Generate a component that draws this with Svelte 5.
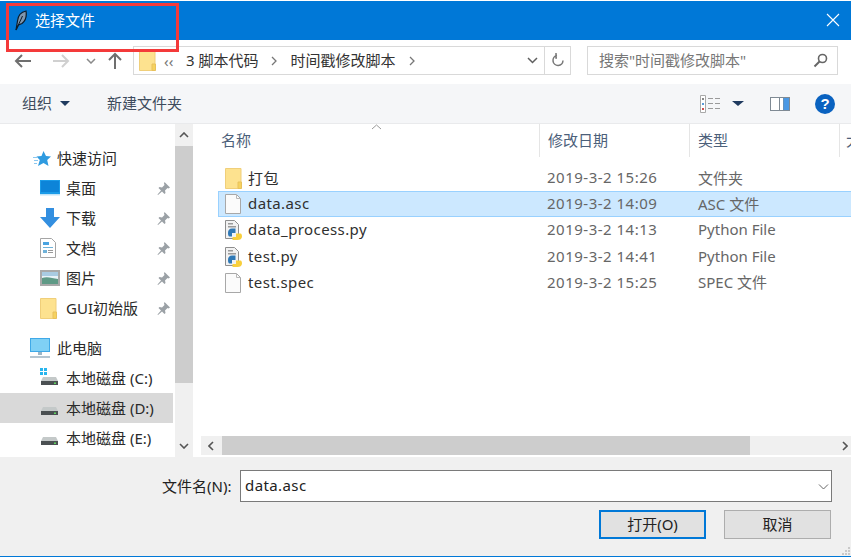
<script>
	const quick = [
		{ name: '桌面', icon: 'desktop' },
		{ name: '下载', icon: 'download' },
		{ name: '文档', icon: 'docs' },
		{ name: '图片', icon: 'pics' },
		{ name: 'GUI初始版', icon: 'folder' }
	]
	const drives = [
		{ name: '本地磁盘 (C:)', win: true },
		{ name: '本地磁盘 (D:)', active: true },
		{ name: '本地磁盘 (E:)' }
	]
	const files = [
		{ name: '打包', date: '2019-3-2 15:26', type: '文件夹', icon: 'folder' },
		{ name: 'data.asc', date: '2019-3-2 14:09', type: 'ASC 文件', icon: 'file', selected: true },
		{ name: 'data_process.py', date: '2019-3-2 14:13', type: 'Python File', icon: 'py' },
		{ name: 'test.py', date: '2019-3-2 14:41', type: 'Python File', icon: 'py' },
		{ name: 'test.spec', date: '2019-3-2 15:25', type: 'SPEC 文件', icon: 'file' }
	]
</script>

{#snippet folder()}
	<svg width="17" height="21" viewBox="0 0 17 21">
		<path d="M.5 .5h15.5v20H.5z" fill="#fde28f" stroke="#f0cf7a" />
		<path d="M13 14h3.500v6.500H13z" fill="#f6d25f" stroke="#e8c15c" />
	</svg>
{/snippet}

{#snippet drive(win)}
	<svg width="20" height="20" viewBox="0 0 20 20">
		{#if win}
			<path d="M0 0h3v3H0zM4 0h3v3H4zM0 4h3v3H0zM4 4h3v3H4z" fill="#28b5ee" />
		{/if}
		<path d="M3 9h13l2 4H1z" fill="#c4c9c9" />
		<path d="M1 13h17v4H1z" fill="#4b5052" />
		<path d="M14 14.500h2v1.500h-2z" fill="#5fd35f" />
	</svg>
{/snippet}

{#snippet pin()}
	<svg class="pin" width="13" height="13" viewBox="0 0 13 13">
		<path d="M7.500 0 13 5.500l-1.500 1-1-.5-2.500 2.500.5 2.500-1 1-2.500-2.500L1 13l-.5-.5L4 8.500 1.500 6l1-1 2.500.5L7.500 3 7 1.500z" fill="#9ba1a6" />
	</svg>
{/snippet}

{#snippet fileIcon(kind)}
	{#if kind === 'folder'}
		{@render folder()}
	{:else if kind === 'file'}
		<svg width="16" height="20" viewBox="0 0 16 20">
			<path d="M.5 .5h11l4 4v15H.5z" fill="#fbfbfb" stroke="#a8a8a8" />
			<path d="M11.500 .5v4h4" fill="none" stroke="#b8b8b8" />
		</svg>
	{:else}
		<svg width="17" height="20" viewBox="0 0 17 20">
			<path d="M.5 .5h9l4 4v14H.5z" fill="#f2f2f2" stroke="#8e8e8e" />
			<path d="M3 3h5v1.500H3zM3 6h8v1.500H3z" fill="#9a9a9a" />
			<path d="M3 13c0-3 1.500-4.500 4-4.500h3.500V13H7v3.500H4.500C3.500 16.500 3 15 3 13z" fill="#2f78b5" />
			<path d="M7.500 20v-3H11v-3.500h4.500c1 0 1.500 1.500 1.500 3 0 2.500-2 3.500-4.500 3.500z" fill="#f8cf3c" />
		</svg>
	{/if}
{/snippet}

<div class="dialog">
	<header class="title">
		<svg class="feather" width="14" height="24" viewBox="0 0 14 24">
			<path d="M2 22 3.500 13C4 8 7 4 12 3c.8 5-.5 10-4 12.500L4.500 17z" fill="#7f96ad" stroke="#0c1c2a" stroke-width="1.200" />
			<path d="M2 22 8.500 8" stroke="#0c1c2a" fill="none" />
		</svg>
		<span>选择文件</span>
		<svg class="close" width="14" height="14" viewBox="0 0 14 14">
			<path d="M1 1l12 12M13 1 1 13" stroke="#fff" stroke-width="1.100" fill="none" />
		</svg>
	</header>

	<nav class="nav">
		<div class="arrows">
			<svg width="20" height="16" viewBox="0 0 20 16"><path d="M9 2 3 8l6 6M3 8h15" fill="none" stroke="#6f6f6f" stroke-width="2" /></svg>
			<svg class="fwd" width="20" height="16" viewBox="0 0 20 16"><path d="M11 2l6 6-6 6M17 8H2" fill="none" stroke="#d0d0d0" stroke-width="2" /></svg>
			<svg class="hist" width="10" height="6" viewBox="0 0 10 6"><path d="M1 1l4 4 4-4" fill="none" stroke="#8a8a8a" stroke-width="1.500" /></svg>
			<svg class="up" width="16" height="18" viewBox="0 0 16 18"><path d="M2 8l6-6 6 6M8 2v15" fill="none" stroke="#6f6f6f" stroke-width="2" /></svg>
		</div>
		<div class="address">
			<span class="addr-folder">{@render folder()}</span>
			<span class="chev">‹‹</span>
			<span class="crumb">3 脚本代码</span>
			<svg class="sep" width="6" height="10" viewBox="0 0 6 10"><path d="M1 1l4 4-4 4" fill="none" stroke="#777" stroke-width="1.300" /></svg>
			<span class="crumb">时间戳修改脚本</span>
			<svg class="sep" width="6" height="10" viewBox="0 0 6 10"><path d="M1 1l4 4-4 4" fill="none" stroke="#777" stroke-width="1.300" /></svg>
			<svg class="drop" width="11" height="7" viewBox="0 0 11 7"><path d="M1 1l4.500 4.500L10 1" fill="none" stroke="#5f5f5f" stroke-width="1.500" /></svg>
			<div class="refresh">
				<svg width="14" height="15" viewBox="0 0 14 15"><path d="M6 2.500A5 5 0 1 0 12 7.500M5 0v5h1" fill="none" stroke="#777" stroke-width="1.500" /></svg>
			</div>
		</div>
		<div class="search">
			<span>搜索"时间戳修改脚本"</span>
			<svg width="15" height="15" viewBox="0 0 15 15"><circle cx="9.500" cy="5.500" r="4" fill="none" stroke="#666" stroke-width="1.600" /><path d="M6.500 8.500 1.500 13.500" stroke="#666" stroke-width="2" /></svg>
		</div>
	</nav>

	<div class="commands">
		<span class="cmd">组织</span>
		<span class="tri"></span>
		<span class="cmd new">新建文件夹</span>
		<svg class="views" width="21" height="18" viewBox="0 0 21 18">
			<path d="M.5 .5h5v17h-5z" fill="#fff" stroke="#a9a9a9" />
			<path d="M2 3h2v2H2z" fill="#888" /><path d="M2 8h2v2H2z" fill="#5a9bd8" /><path d="M2 13h2v2H2z" fill="#d05050" />
			<path d="M8 3h5v1H8zM15 3h5v1h-5zM8 8h5v1H8zM15 8h5v1h-5zM8 13h5v1H8zM15 13h5v1h-5z" fill="#9a9a9a" />
		</svg>
		<span class="tri views-tri"></span>
		<svg class="pane" width="20" height="14" viewBox="0 0 20 14">
			<path d="M0 0h20v14H0z" fill="#7f8a94" />
			<path d="M1 1h8v12H1z" fill="#fff" /><path d="M10 1h3v12h-3z" fill="#fff" /><path d="M13.500 1H19v12h-5.500z" fill="#4a98e4" />
		</svg>
		<span class="help">?</span>
	</div>

	<main class="body">
		<aside class="side">
			<ul>
				<li class="top">
					<svg width="18" height="15" viewBox="0 0 18 15"><path d="M10.500 0l2.500 5 5 .5-3.800 3.500 1.300 6-5-3-5.500 3 1.800-6L3.500 5.500l5-.5z" fill="#2f9be0" /><path d="M0 6.500h5M1 9.500h4M1 12.500h3" stroke="#8cc8f0" /></svg>
					<span>快速访问</span>
				</li>
				{#each quick as q}
					<li class="sub">
						<span class="ico">
							{#if q.icon === 'desktop'}
								<svg width="20" height="16" viewBox="0 0 20 16"><path d="M0 0h20v15H0z" fill="#1a9be8" /><path d="M1 1h18v11H1z" fill="#0d84d8" /><path d="M0 14h20v1.500H0z" fill="#bfe3f7" /></svg>
							{:else if q.icon === 'download'}
								<svg width="20" height="20" viewBox="0 0 20 20"><path d="M6 0h8v9h6L10 20 0 9h6z" fill="#338fe0" /></svg>
							{:else if q.icon === 'docs'}
								<svg width="16" height="20" viewBox="0 0 16 20"><path d="M.5 .5h11l4 4v15H.5z" fill="#fff" stroke="#a5a5a5" /><path d="M3 4h6v3H3z" fill="#4aa3e0" /><path d="M3 9h10v1H3zM3 12h4v3H3z" fill="#6fb2d9" /><path d="M8 12h5v1H8zM8 14h5v1H8z" fill="#999" /></svg>
							{:else if q.icon === 'pics'}
								<svg width="20" height="16" viewBox="0 0 20 16"><path d="M0 0h20v16H0z" fill="#a9a9a9" /><path d="M2 2h16v12H2z" fill="#e8f2f8" /><path d="M2 8c5-2 10 0 16 1v5H2z" fill="#5f9a86" /><path d="M2 2h16v4H2z" fill="#a9cbe2" /></svg>
							{:else}
								{@render folder()}
							{/if}
						</span>
						<span class="label">{q.name}</span>
						{@render pin()}
					</li>
				{/each}
				<li class="top pc">
					<svg width="20" height="20" viewBox="0 0 20 20"><path d="M0 0h20v14H0z" fill="#3fa9e8" /><path d="M1 1h18v12H1z" fill="#7fd0f5" /><path d="M8 14h4v3H8z" fill="#9db6c7" /><path d="M0 18h20v2H0z" fill="#b5c6d1" /></svg>
					<span>此电脑</span>
				</li>
				{#each drives as d}
					<li class="sub" class:active={d.active}>
						<span class="ico">{@render drive(d.win)}</span>
						<span class="label">{d.name}</span>
					</li>
				{/each}
			</ul>
		</aside>

		<div class="vbar">
			<button aria-label="up"><svg width="10" height="6" viewBox="0 0 10 6"><path d="M1 5l4-4 4 4" fill="none" stroke="#555" stroke-width="1.600" /></svg></button>
			<div class="vtrack"><div class="vthumb"></div></div>
			<button aria-label="down"><svg width="10" height="6" viewBox="0 0 10 6"><path d="M1 1l4 4 4-4" fill="none" stroke="#555" stroke-width="1.600" /></svg></button>
		</div>

		<section class="list">
			<div class="head">
				<span class="col name">名称</span>
				<svg class="sort" width="11" height="6" viewBox="0 0 11 6"><path d="M1 5l4.500-4L10 5" fill="none" stroke="#9a9a9a" /></svg>
				<span class="col date">修改日期</span>
				<span class="col type">类型</span>
				<span class="col more">大</span>
			</div>
			<div class="rows">
				{#each files as f}
					<div class="row" class:selected={f.selected}>
						<span class="fico">{@render fileIcon(f.icon)}</span>
						<span class="fname">{f.name}</span>
						<span class="fdate">{f.date}</span>
						<span class="ftype">{f.type}</span>
					</div>
				{/each}
			</div>
			<div class="hbar">
				<svg width="6" height="10" viewBox="0 0 6 10"><path d="M5 1 1 5l4 4" fill="none" stroke="#555" stroke-width="1.600" /></svg>
				<div class="htrack"><div class="hthumb"></div></div>
				<svg width="6" height="10" viewBox="0 0 6 10"><path d="M1 1l4 4-4 4" fill="none" stroke="#555" stroke-width="1.600" /></svg>
			</div>
		</section>
	</main>

	<footer class="foot">
		<div class="fname-row">
			<label for="fn">文件名(N):</label>
			<div class="combo">
				<input id="fn" value="data.asc" />
				<svg width="11" height="6" viewBox="0 0 11 6"><path d="M1 .5l4.500 4.500L10 .5" fill="none" stroke="#666" /></svg>
			</div>
		</div>
		<div class="buttons">
			<button class="btn primary">打开(O)</button>
			<button class="btn">取消</button>
		</div>
		<svg class="grip" width="10" height="10" viewBox="0 0 10 10">
			<path d="M7 1h2v2H7zM4 4h2v2H4zM7 4h2v2H7zM1 7h2v2H1zM4 7h2v2H4zM7 7h2v2H7z" fill="#c9c9c9" />
		</svg>
	</footer>

	<div class="annotation"></div>
</div>

<style>
	:global(body) {
		margin: 0;
		background: #fff;
	}
	.dialog {
		position: relative;
		width: 851px;
		height: 557px;
		padding-top: 1px;
		box-sizing: border-box;
		display: flex;
		flex-direction: column;
		overflow: hidden;
		font-family: "Noto Sans", "Noto Sans CJK SC", sans-serif;
		font-size: 15px;
		color: #2a2a2a;
		border-bottom: 1px solid #0078d7;
	}
	.title {
		height: 39px;
		flex: none;
		box-sizing: border-box;
		background: #0078d7;
		color: #fff;
		display: flex;
		align-items: center;
		padding: 0 11px 2px 14px;
	}
	.title span {
		margin-left: 7px;
		flex: 1;
	}
	.annotation {
		position: absolute;
		left: 6px;
		top: 3px;
		width: 167px;
		height: 43px;
		border: 3px solid #f43a3a;
	}
	.nav {
		height: 44px;
		flex: none;
		background: #fff;
		display: flex;
		align-items: center;
		padding-left: 13px;
		box-sizing: border-box;
		padding-bottom: 3px;
	}
	.arrows {
		width: 120px;
		display: flex;
		align-items: center;
	}
	.fwd {
		margin-left: 18px;
	}
	.hist {
		margin-left: 15px;
	}
	.up {
		margin-left: 11px;
	}
	.address {
		width: 438px;
		height: 29px;
		box-sizing: border-box;
		border: 1px solid #d9d9d9;
		display: flex;
		align-items: center;
		padding-left: 5px;
		color: #333;
	}
	.addr-folder {
		height: 21px;
	}
	.chev {
		margin-left: 8px;
		color: #777;
		width: 22px;
	}
	.crumb, .search span {
		margin-top: -2px;
	}
	.sep {
		margin: 0 13px;
	}
	.drop {
		margin-left: auto;
		margin-right: 6px;
	}
	.refresh {
		width: 25px;
		height: 100%;
		border-left: 1px solid #d9d9d9;
		display: flex;
		align-items: center;
		justify-content: center;
	}
	.search {
		margin-left: 16px;
		width: 251px;
		height: 29px;
		box-sizing: border-box;
		border: 1px solid #d9d9d9;
		display: flex;
		align-items: center;
		justify-content: space-between;
		padding: 0 9px 0 11px;
		color: #777;
	}
	.commands {
		height: 39px;
		flex: none;
		background: #f5f6f8;
		display: flex;
		align-items: center;
		padding-left: 22px;
		color: #3d4b5c;
	}
	.cmd {
		margin-top: -3px;
	}
	.tri {
		width: 0;
		height: 0;
		border-left: 5px solid transparent;
		border-right: 5px solid transparent;
		border-top: 5px solid #1f3a5f;
		margin-left: 8px;
	}
	.new {
		margin-left: 37px;
		flex: 1;
	}
	.views-tri {
		margin-left: 11px;
		margin-right: 26px;
		border-left-width: 6px;
		border-right-width: 6px;
	}
	.help {
		margin: 0 16px 0 25px;
		width: 20px;
		height: 20px;
		border-radius: 50%;
		background: #0a62c0;
		color: #fff;
		font-weight: 700;
		font-size: 15px;
		line-height: 20px;
		text-align: center;
		font-family: "Liberation Sans", sans-serif;
	}
	.body {
		flex: 1;
		min-height: 0;
		display: flex;
		background: #fff;
		border-top: 1px solid #e9eaec;
	}
	.side {
		width: 175px;
		flex: none;
		overflow: hidden;
	}
	ul {
		list-style: none;
		margin: 0;
		padding: 19px 0 0;
	}
	li {
		height: 30px;
		display: flex;
		align-items: center;
		width: 173px;
		box-sizing: border-box;
	}
	li span:not(.ico) {
		margin-top: -2px;
	}
	.top {
		padding-left: 33px;
		gap: 6px;
	}
	.top.pc {
		margin-top: 10px;
		padding-left: 30px;
		gap: 7px;
	}
	.sub {
		padding-left: 40px;
	}
	.ico {
		width: 26px;
		display: flex;
		align-items: center;
	}
	.label {
		flex: 1;
	}
	.pin {
		margin-right: 3px;
	}
	.active {
		background: #d9d9d9;
	}
	.vbar {
		width: 18px;
		flex: none;
		background: #f0f0f0;
		display: flex;
		flex-direction: column;
	}
	.vbar button {
		height: 22px;
		border: 0;
		padding: 0;
		background: #f0f0f0;
		display: flex;
		align-items: center;
		justify-content: center;
	}
	.vtrack {
		flex: 1;
	}
	.vthumb {
		height: 237px;
		background: #cdcdcd;
	}
	.list {
		flex: 1;
		min-width: 0;
		display: flex;
		flex-direction: column;
		border-left: 8px solid #fff;
	}
	.head {
		position: relative;
		height: 33px;
		flex: none;
		display: flex;
		align-items: center;
		color: #4c607a;
		background: #fff;
	}
	.col {
		box-sizing: border-box;
		height: 100%;
		flex: none;
		display: flex;
		align-items: center;
		padding: 0 0 3px 8px;
		border-right: 1px solid #e5e5e5;
	}
	.name {
		width: 339px;
		padding-left: 20px;
	}
	.sort {
		position: absolute;
		left: 170px;
		top: 0;
	}
	.date {
		width: 150px;
	}
	.type {
		width: 150px;
	}
	.more {
		border-right: 0;
		padding-left: 6px;
	}
	.rows {
		flex: 1;
		padding-top: 8px;
		padding-left: 17px;
	}
	.row {
		height: 26.200px;
		display: flex;
		align-items: center;
		box-sizing: border-box;
		padding-left: 6px;
		border: 1px solid transparent;
		color: #303030;
	}
	.row.selected {
		background: #cce8ff;
		border-color: #99d1ff;
		border-right: 0;
	}
	.fico {
		width: 23px;
		flex: none;
		display: flex;
		align-items: center;
	}
	.fname, .fdate, .ftype {
		margin-top: -2px;
	}
	.fname {
		width: 299px;
		flex: none;
		letter-spacing: .4px;
	}
	.fdate {
		width: 151px;
		flex: none;
		color: #666;
		letter-spacing: .5px;
	}
	.ftype {
		color: #666;
	}
	.hbar {
		height: 19px;
		margin-bottom: 2px;
		flex: none;
		display: flex;
		align-items: center;
		background: #f0f0f0;
		padding: 0 3px 0 7px;
	}
	.htrack {
		flex: 1;
		height: 100%;
		margin-left: 8px;
	}
	.hthumb {
		width: 528px;
		height: 100%;
		background: #cdcdcd;
	}
	.foot {
		position: relative;
		flex: none;
		height: 99px;
		box-sizing: border-box;
		background: #f0f0f0;
		padding-top: 13px;
	}
	.grip {
		position: absolute;
		right: 0;
		bottom: 0;
	}
	.fname-row {
		display: flex;
		align-items: center;
		padding-left: 162px;
	}
	label {
		width: 78px;
		margin-top: -2px;
		color: #222;
	}
	.combo {
		position: relative;
		width: 592px;
		height: 32px;
	}
	input {
		width: 100%;
		height: 100%;
		box-sizing: border-box;
		border: 1px solid #7a7a7a;
		padding: 0 4px 3px;
		font: inherit;
		letter-spacing: .4px;
		color: #222;
		background: #fff;
		outline: none;
	}
	.combo svg {
		position: absolute;
		right: 3px;
		top: 14px;
	}
	.buttons {
		display: flex;
		gap: 18px;
		padding: 8px 0 0 599px;
	}
	.btn {
		width: 107px;
		height: 29px;
		box-sizing: border-box;
		border: 1px solid #adadad;
		background: #e1e1e1;
		font: inherit;
		color: #222;
		padding: 0 0 3px;
	}
	.primary {
		border: 2px solid #0078d7;
	}
</style>
